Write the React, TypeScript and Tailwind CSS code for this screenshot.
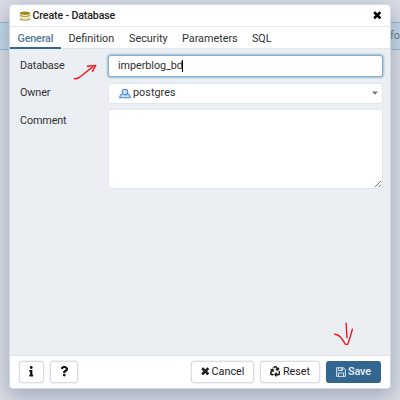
import React from 'react';
import { FaInfo, FaQuestion, FaRecycle } from 'react-icons/fa';

function Cross({ size }: { size: number }) {
  return (
    <svg width={size} height={size} viewBox="0 0 10 10" fill="currentColor">
      <path d="M2.9 .7 5 2.8 7.1 .7Q7.6 .4 8 .7L9.3 2Q9.6 2.4 9.3 2.9L7.2 5 9.3 7.1Q9.6 7.6 9.3 8L8 9.3Q7.6 9.6 7.1 9.3L5 7.2 2.9 9.3Q2.4 9.6 2 9.3L.7 8Q.4 7.6 .7 7.1L2.8 5 .7 2.9Q.4 2.4 .7 2L2 .7Q2.4 .4 2.9 .7Z" />
    </svg>
  );
}

function DatabaseIcon() {
  return (
    <svg width="12" height="10" viewBox="0 0 12 10" className="shrink-0">
      <ellipse cx="6" cy="2.2" rx="5.2" ry="1.7" fill="#a98819" />
      <path d="M.7 4.3Q2.4 5.5 6 5.5T11.3 4.3" fill="none" stroke="#b59a35" strokeWidth="1.2" />
      <path d="M.7 6.4Q2.4 7.4 6 7.4T11.3 6.4" fill="none" stroke="#ddcd8c" strokeWidth=".9" />
      <path d="M.7 8Q2.4 9.2 6 9.2T11.3 8" fill="none" stroke="#b59a35" strokeWidth="1.1" />
    </svg>
  );
}

function UserIcon() {
  return (
    <svg width="12" height="11" viewBox="0 0 12 11" className="shrink-0" fill="#c4e2fa" stroke="#5289d0" strokeWidth="1.1" strokeLinejoin="round">
      <path d="M.7 9.7 1.3 7.4Q2.2 6.1 3.6 5.8H8.4Q9.8 6.1 10.7 7.4L11.3 9.7Z" />
      <path d="M3.2 4.2C3.2 .3 8.8 .3 8.8 4.2 8.8 7.7 3.2 7.7 3.2 4.2Z" />
    </svg>
  );
}

function SaveIcon() {
  return (
    <svg width="10" height="10" viewBox="0 0 10 10" fill="none" stroke="#e9f0f5" strokeWidth=".9">
      <path d="M.6 .7H7.4L9.4 2.7V9.4H.6Z" />
      <path d="M2.4 .8V3.5H6.7V.8M2.4 9.3V6H7.6V9.3M5.3 1V3" />
    </svg>
  );
}

const button =
  'flex h-[22px] items-center justify-center rounded-[3px] border border-[#d9dde6] bg-white text-[#222] shadow-[0_0_0_0.4px_#e3e6ee]';

export default function App() {
  return (
    <div className="relative h-[400px] w-[400px] overflow-hidden bg-[#dce0e8] font-['Roboto','Liberation_Sans',sans-serif] text-[10.8px] leading-[14px] text-[#2f3134]">
      <div className="absolute inset-x-0 top-[22px] flex h-[28px] items-center justify-end border-y border-[#98b9d0] bg-[#c5dbea] text-[#68737d]">
        <span className="w-[10px] whitespace-nowrap">fo</span>
      </div>

      <div className="absolute top-[4px] left-[9px] flex h-[385px] w-[382px] flex-col overflow-hidden rounded-[4px] border border-[#d5dbe4] bg-white shadow-[0_6px_22px_2px_rgba(80,90,120,0.42)]">
        <header className="flex h-[22px] shrink-0 items-center border-b border-[#e6e8eb] pr-[8.5px] pl-[9px] text-[#222]">
          <DatabaseIcon />
          <h1 className="ml-[1.5px] text-[10.6px] font-medium tracking-[-0.12px]">Create - Database</h1>
          <span className="ml-auto text-black"><Cross size={8.5} /></span>
        </header>

        <nav className="flex h-[22px] shrink-0 border-b border-[#e2e6eb] leading-[23px]">
          <span className="h-[22px] w-[51px] border-b-2 border-[#326690] pl-[7.5px] font-medium tracking-[-0.2px] text-[#54789a]">General</span>
          <span className="w-[60.5px] pl-[7.5px]">Definition</span>
          <span className="w-[53.5px] pl-[7.5px]">Security</span>
          <span className="w-[69.5px] pl-[7px]">Parameters</span>
          <span className="pl-[7.5px] tracking-[-0.1px]">SQL</span>
        </nav>

        <main className="flex flex-1 flex-col bg-[#ebeef3] pt-[6px] pr-[7px] pl-[10px]">
          <div className="flex h-[22px] items-center">
            <label className="w-[88px] tracking-[-0.12px]">Database</label>
            <div className="flex h-[22px] flex-1 items-center rounded-[3px] border border-[#85afcb] bg-white pl-[9px] tracking-[-0.05px] shadow-[0_0_0_1.5px_#b3cbdc]">
              imperblog_bd<span className="-ml-[0.5px] h-[12px] w-px bg-black" />
            </div>
          </div>
          <div className="mt-[5px] flex h-[22px] items-center">
            <label className="w-[88px] tracking-[-0.12px]">Owner</label>
            <div className="flex h-[21px] flex-1 items-center rounded-[3px] border border-[#e2e6ed] bg-white pr-[4px] pl-[10px]">
              <UserIcon /><span className="ml-[2px] tracking-[0.03px]">postgres</span>
              <svg className="ml-auto" width="6" height="4" viewBox="0 0 6 4" fill="#777"><path d="M0 .5H6L3 3.8Z" /></svg>
            </div>
          </div>
          <div className="mt-[5px] flex h-[80px]">
            <label className="w-[88px] pt-[5px] tracking-[-0.12px]">Comment</label>
            <div className="flex flex-1 items-end justify-end rounded-[3px] border border-[#e2e6ed] bg-white">
              <svg width="8" height="8" viewBox="0 0 8 8" fill="none" stroke="#666" strokeWidth=".9"><path d="M.8 7.2 7 1M4.5 7.2 7 4.7" /></svg>
            </div>
          </div>
        </main>

        <footer className="flex h-[33px] shrink-0 items-center border-t border-[#e0e4e9] pr-[9px] pb-px pl-[9px]">
          <button className={`${button} w-[25px]`}><FaInfo size={10.5} color="#111" /></button>
          <button className={`${button} ml-[6px] w-[28px]`}><FaQuestion size={10.5} color="#111" /></button>
          <button className={`${button} ml-auto w-[63px] gap-[2.5px]`}><Cross size={8.5} />Cancel</button>
          <button className={`${button} ml-[6px] w-[60px] gap-[2.5px]`}><FaRecycle size={10.5} color="#111" stroke="#111" strokeWidth={18} />Reset</button>
          <button className="ml-[6px] flex h-[22px] w-[55px] items-center justify-center gap-[2px] rounded-[3px] bg-[#326690] font-medium tracking-[-0.1px] text-[#e9f0f5]"><SaveIcon />Save</button>
        </footer>
      </div>

      <svg className="pointer-events-none absolute inset-0" width="400" height="400" fill="none" stroke="#f5171c" strokeWidth="1.4" strokeLinecap="round" strokeLinejoin="round">
        <path d="M74.2 78.6Q78 79.2 81.5 75.7L93 66.6M87.5 66.2 95.8 65.4 92.5 71.3" />
        <path d="M346.1 323.2Q346.5 328 346.9 337.5M334.6 334.2Q339.5 334.8 342 339L345.5 344.4H347.7L350.2 337 352.4 329.2" />
      </svg>
    </div>
  );
}
